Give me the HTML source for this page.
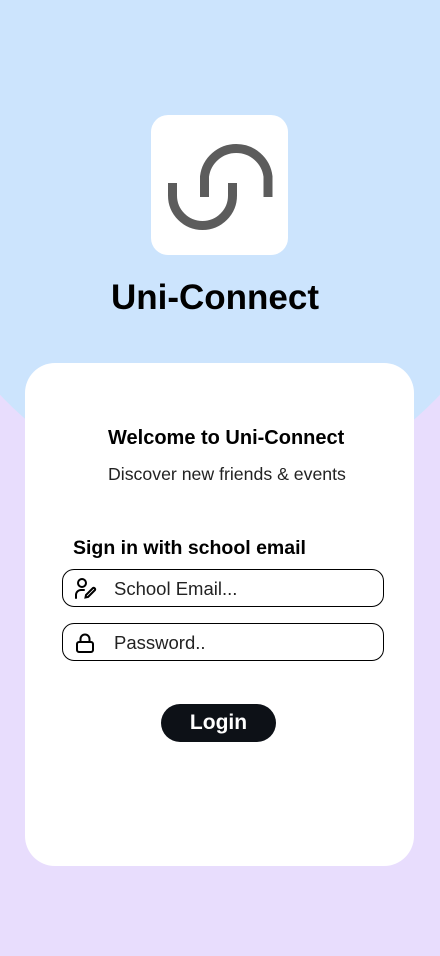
<!DOCTYPE html>
<html><head><meta charset="utf-8"><style>
*{margin:0;padding:0;box-sizing:border-box}
body{width:440px;height:956px;overflow:hidden;background:#e8ddfd;font-family:"Liberation Sans",sans-serif;position:relative}
.blue{position:absolute;left:-200px;top:-920px;width:840px;height:1420px;border-radius:50%;background:#cce4fd}
.logo{position:absolute;left:151px;top:115px;width:137px;height:140px;background:#fff;border-radius:17px}
h1{position:absolute;top:278px;width:430px;text-align:center;font-size:35px;font-weight:bold;color:#000}
.card{position:absolute;left:25px;top:363px;width:389px;height:503px;background:#fff;border-radius:30px}
.t{position:absolute;color:#000}
.inp{position:absolute;left:62px;width:322px;height:38px;border:1px solid #000;border-radius:12px}
.inp span{position:absolute;left:51px;top:8px;font-size:18.5px;color:#222}
.inp svg{position:absolute;left:11px;top:8px}
.btn{position:absolute;left:161px;top:704px;width:115px;height:38px;background:#0d1117;border-radius:19px;color:#fff;font-weight:bold;font-size:21px;text-align:center;line-height:38px}
</style></head><body>
<div class="blue"></div>
<div class="logo"></div>
<svg style="position:absolute;left:0;top:0" width="440" height="300"><path d="M172.5 183 V195.5 A30 30 0 0 0 232.5 195.5 V183 M204.5 197 V176.5 A32 32 0 0 1 268 176.5 V197" fill="none" stroke="#5c5c5c" stroke-width="9"/></svg>
<h1>Uni-Connect</h1>
<div class="card"></div>
<div class="t" style="top:427px;left:108px;font-size:20px;font-weight:bold">Welcome to Uni-Connect</div>
<div class="t" style="top:464px;left:108px;font-size:17.7px;color:#222">Discover new friends &amp; events</div>
<div class="t" style="top:537px;left:73px;font-size:19.5px;font-weight:bold">Sign in with school email</div>
<div class="inp" style="top:569px"><svg width="24" height="22" viewBox="0 0 24 22" fill="none" stroke="#000" stroke-width="2" stroke-linecap="round"><circle cx="8" cy="5" r="4"/><path d="M2 20v-3a5 5 0 0 1 5-5h3"/><path d="M14 19l7-7a1.5 1.5 0 0 0-2-2l-7 7-0.5 2.5z"/></svg><span>School Email...</span></div>
<div class="inp" style="top:623px"><svg width="22" height="22" viewBox="0 0 22 22" fill="none" stroke="#000" stroke-width="2"><rect x="3" y="10" width="16" height="10" rx="2"/><path d="M6.5 10V7a4.5 4.5 0 0 1 9 0v3"/></svg><span>Password..</span></div>
<div class="btn">Login</div>
</body></html>
